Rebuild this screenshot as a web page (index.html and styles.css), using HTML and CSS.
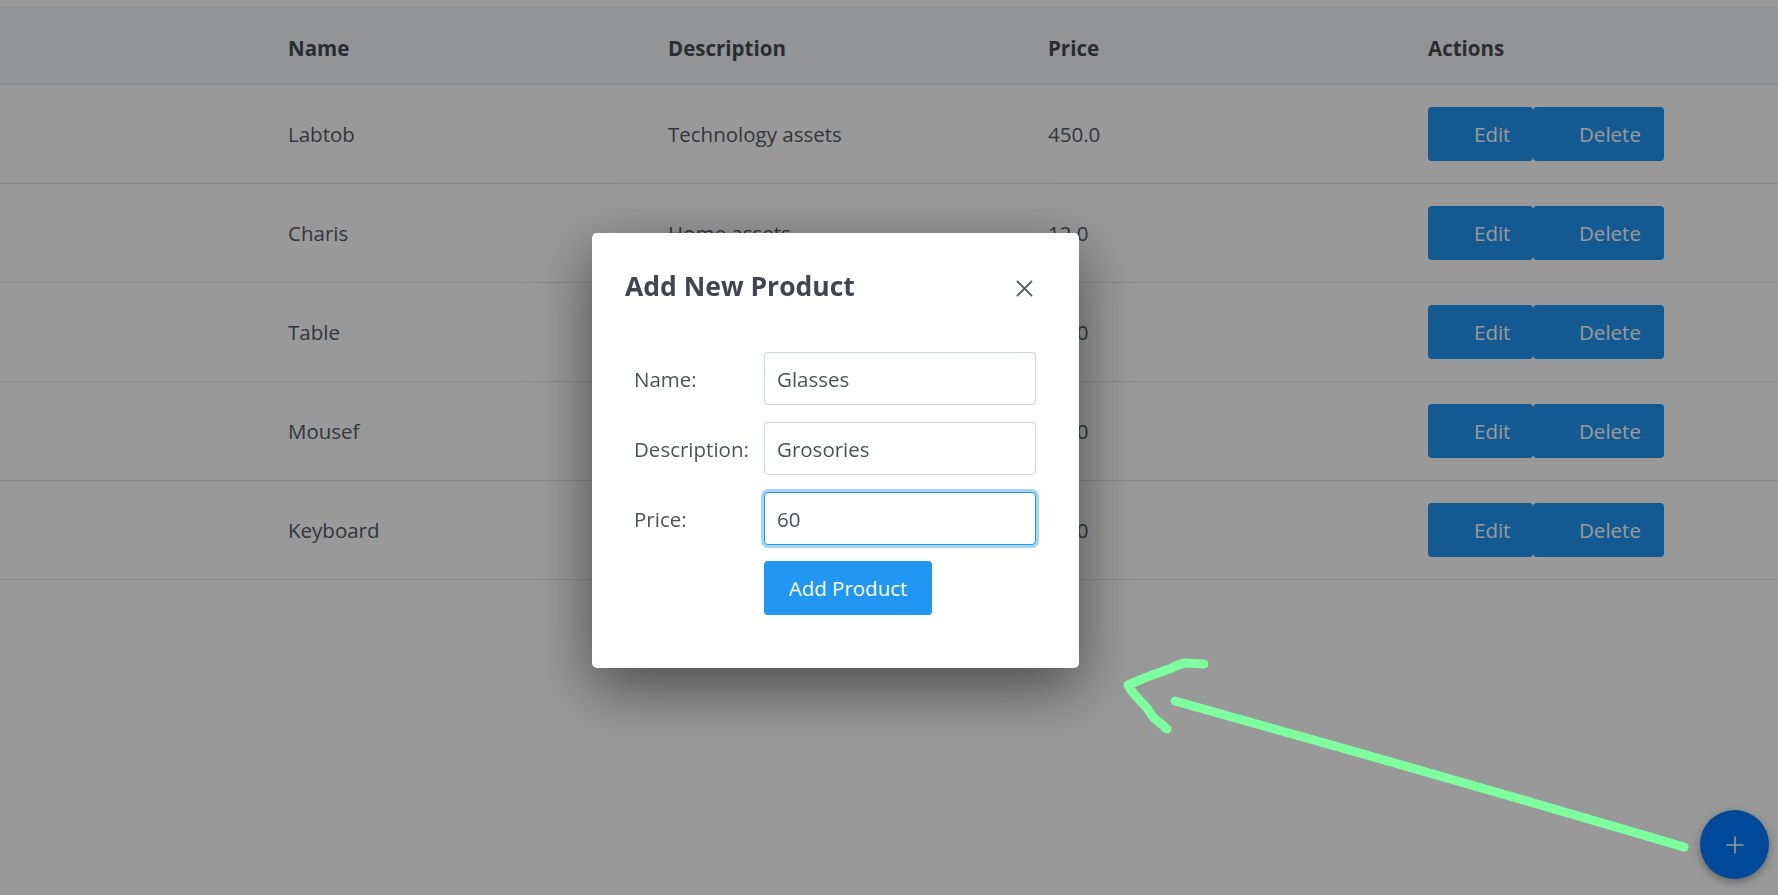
FILE: index.html
```html
<!DOCTYPE html>
<html lang="en">
<head>
<meta charset="utf-8">
<title>Products</title>
<link rel="stylesheet" href="styles.css">
</head>
<body>
  <main class="page">
    <div class="table">
      <div class="row head">
        <div class="cell">Name</div>
        <div class="cell">Description</div>
        <div class="cell">Price</div>
        <div class="cell">Actions</div>
      </div>
      <div class="row">
        <div class="cell">Labtob</div>
        <div class="cell">Technology assets</div>
        <div class="cell">450.0</div>
        <div class="cell actions"><button class="btn btn-edit">Edit</button><button class="btn btn-delete">Delete</button></div>
      </div>
      <div class="row">
        <div class="cell">Charis</div>
        <div class="cell">Home assets</div>
        <div class="cell">12.0</div>
        <div class="cell actions"><button class="btn btn-edit">Edit</button><button class="btn btn-delete">Delete</button></div>
      </div>
      <div class="row">
        <div class="cell">Table</div>
        <div class="cell">Home assets</div>
        <div class="cell">35.0</div>
        <div class="cell actions"><button class="btn btn-edit">Edit</button><button class="btn btn-delete">Delete</button></div>
      </div>
      <div class="row">
        <div class="cell">Mousef</div>
        <div class="cell">Technology assets</div>
        <div class="cell">20.0</div>
        <div class="cell actions"><button class="btn btn-edit">Edit</button><button class="btn btn-delete">Delete</button></div>
      </div>
      <div class="row">
        <div class="cell">Keyboard</div>
        <div class="cell">Technology assets</div>
        <div class="cell">45.0</div>
        <div class="cell actions"><button class="btn btn-edit">Edit</button><button class="btn btn-delete">Delete</button></div>
      </div>
    </div>
  </main>

  <button class="fab" aria-label="Add">
    <svg width="18" height="18" viewBox="0 0 18 18"><path d="M9 0.5V17.5M0.5 9H17.5" stroke="#fff" stroke-width="1.6" fill="none"/></svg>
  </button>

  <div class="backdrop"></div>

  <div class="modal">
    <div class="modal-header">
      <h2 class="modal-title">Add New Product</h2>
      <button class="close" aria-label="Close">
        <svg width="17" height="17" viewBox="0 0 17 17"><path d="M1 1L16 16M16 1L1 16" stroke="#5a626b" stroke-width="1.8" fill="none"/></svg>
      </button>
    </div>
    <form class="form">
      <label class="label">Name:</label>
      <input class="input" type="text" value="Glasses">
      <label class="label">Description:</label>
      <input class="input" type="text" value="Grosories">
      <label class="label">Price:</label>
      <input class="input focused" type="text" value="60">
      <span></span>
      <button type="button" class="btn-primary">Add Product</button>
    </form>
  </div>

  <svg class="annotation" width="1778" height="895" viewBox="0 0 1778 895">
    <g fill="none" stroke="#7dfe9f" stroke-width="9" stroke-linecap="round" stroke-linejoin="round">
      <path d="M1684 847 Q1430 772 1175 701"/>
      <path d="M1204 664 L1185 663 Q1176 665 1172 668 L1158 673 L1147 677 L1128 685 L1133 693 L1147 708 L1153 717 L1167 729"/>
    </g>
  </svg>
</body>
</html>
```

FILE: styles.css
```css
* { box-sizing: border-box; }

html, body {
  margin: 0;
  padding: 0;
  background: #ffffff;
  font-family: "Open Sans", "Noto Sans", Arial, sans-serif;
  overflow: hidden;
}

.page {
  width: 1778px;
  height: 895px;
}

.table {
  margin-top: 6px;
}

.row {
  display: grid;
  grid-template-columns: 380px 380px 380px 1fr;
  padding-left: 288px;
  height: 99px;
  border-bottom: 1px solid #e6e6e6;
  align-items: center;
  font-size: 20.5px;
  color: #565c64;
}

.row.head {
  height: 79px;
  background: #f6f7f8;
  font-weight: 700;
  color: #454c53;
  padding-top: 5px;
}

.actions {
  display: flex;
}

.btn {
  height: 54px;
  border: none;
  border-radius: 4px;
  background: #2196f3;
  color: #ffffff;
  font-family: inherit;
  font-size: 20.5px;
  text-align: left;
  padding: 0 0 0 46px;
}

.btn-edit { width: 105px; }
.btn-delete { width: 131px; }

.fab {
  position: fixed;
  right: 9px;
  bottom: 16px;
  width: 69px;
  height: 69px;
  border-radius: 50%;
  border: none;
  background: #007bff;
  display: flex;
  align-items: center;
  justify-content: center;
  padding: 0;
  box-shadow: 0 3px 8px rgba(0, 0, 0, 0.35);
}

.backdrop {
  position: fixed;
  inset: 0;
  background: rgba(0, 0, 0, 0.4);
}

.modal {
  position: fixed;
  left: 592px;
  top: 233px;
  width: 487px;
  background: #ffffff;
  border-radius: 5px;
  padding: 34px 43px 53px 33px;
  box-shadow: 0 20px 60px rgba(0, 0, 0, 0.5);
}

.modal-header {
  display: flex;
  justify-content: space-between;
  align-items: center;
}

.modal-title {
  margin: 0;
  font-size: 26.5px;
  line-height: 38px;
  font-weight: 700;
  color: #3f4650;
}

.close {
  border: none;
  background: none;
  padding: 0;
  width: 17px;
  height: 17px;
  margin: 4px 3px 0 0;
  display: block;
}
.close svg { display: block; }

.form {
  margin: 47px 0 0 9px;
  display: grid;
  grid-template-columns: 130px 272px;
  row-gap: 17px;
  align-items: center;
}

.label {
  font-size: 20.5px;
  color: #4d5359;
}

.input {
  height: 53px;
  width: 272px;
  border: 1px solid #ced4da;
  border-radius: 4px;
  padding: 0 12px;
  font-family: inherit;
  font-size: 20.5px;
  color: #495057;
  outline: none;
}

.input.focused {
  border-color: #2196f3;
  box-shadow: 0 0 0 3px rgba(33, 150, 243, 0.4);
}

.btn-primary {
  margin-top: -1px;
  width: 168px;
  height: 54px;
  border: none;
  border-radius: 4px;
  background: #2196f3;
  color: #ffffff;
  font-family: inherit;
  font-size: 20.5px;
  padding: 0;
}

.annotation {
  position: fixed;
  left: 0;
  top: 0;
  pointer-events: none;
}
```
